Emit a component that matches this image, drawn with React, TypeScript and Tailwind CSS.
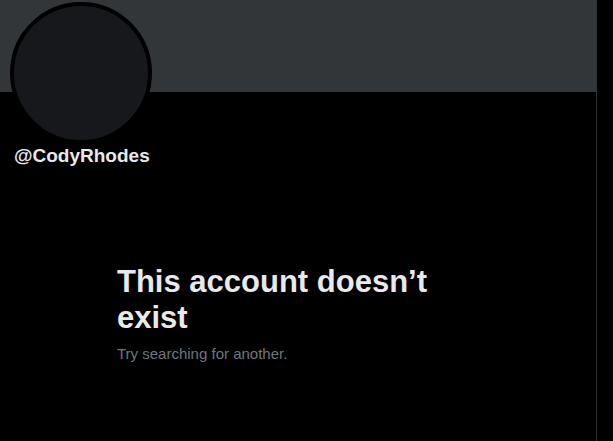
const App = () => {
  return (
    <div className="h-screen w-full bg-black overflow-hidden font-['Liberation_Sans',Arial,sans-serif]">
      <div className="h-full w-[597px] border-r border-[#2f3336]">
        <div className="h-[92px] w-full bg-[#333639]"></div>
        <div className="px-[10px]">
          <div className="-mt-[90px] h-[142px] w-[142px] rounded-full border-[4px] border-black bg-[#16181c]"></div>
        </div>
        <div className="px-[14px] text-[19px] leading-[24px] font-bold text-[#e7e9ea]">@CodyRhodes</div>

        <div className="mt-[96px] ml-[117px] w-[330px]">
          <h1 className="text-[31px] leading-[36px] font-bold text-[#e7e9ea] mb-2">
            This account doesn’t exist
          </h1>
          <p className="text-[15px] leading-[20px] text-[#71767b]">Try searching for another.</p>
        </div>
      </div>
    </div>
  );
};

export default App;
